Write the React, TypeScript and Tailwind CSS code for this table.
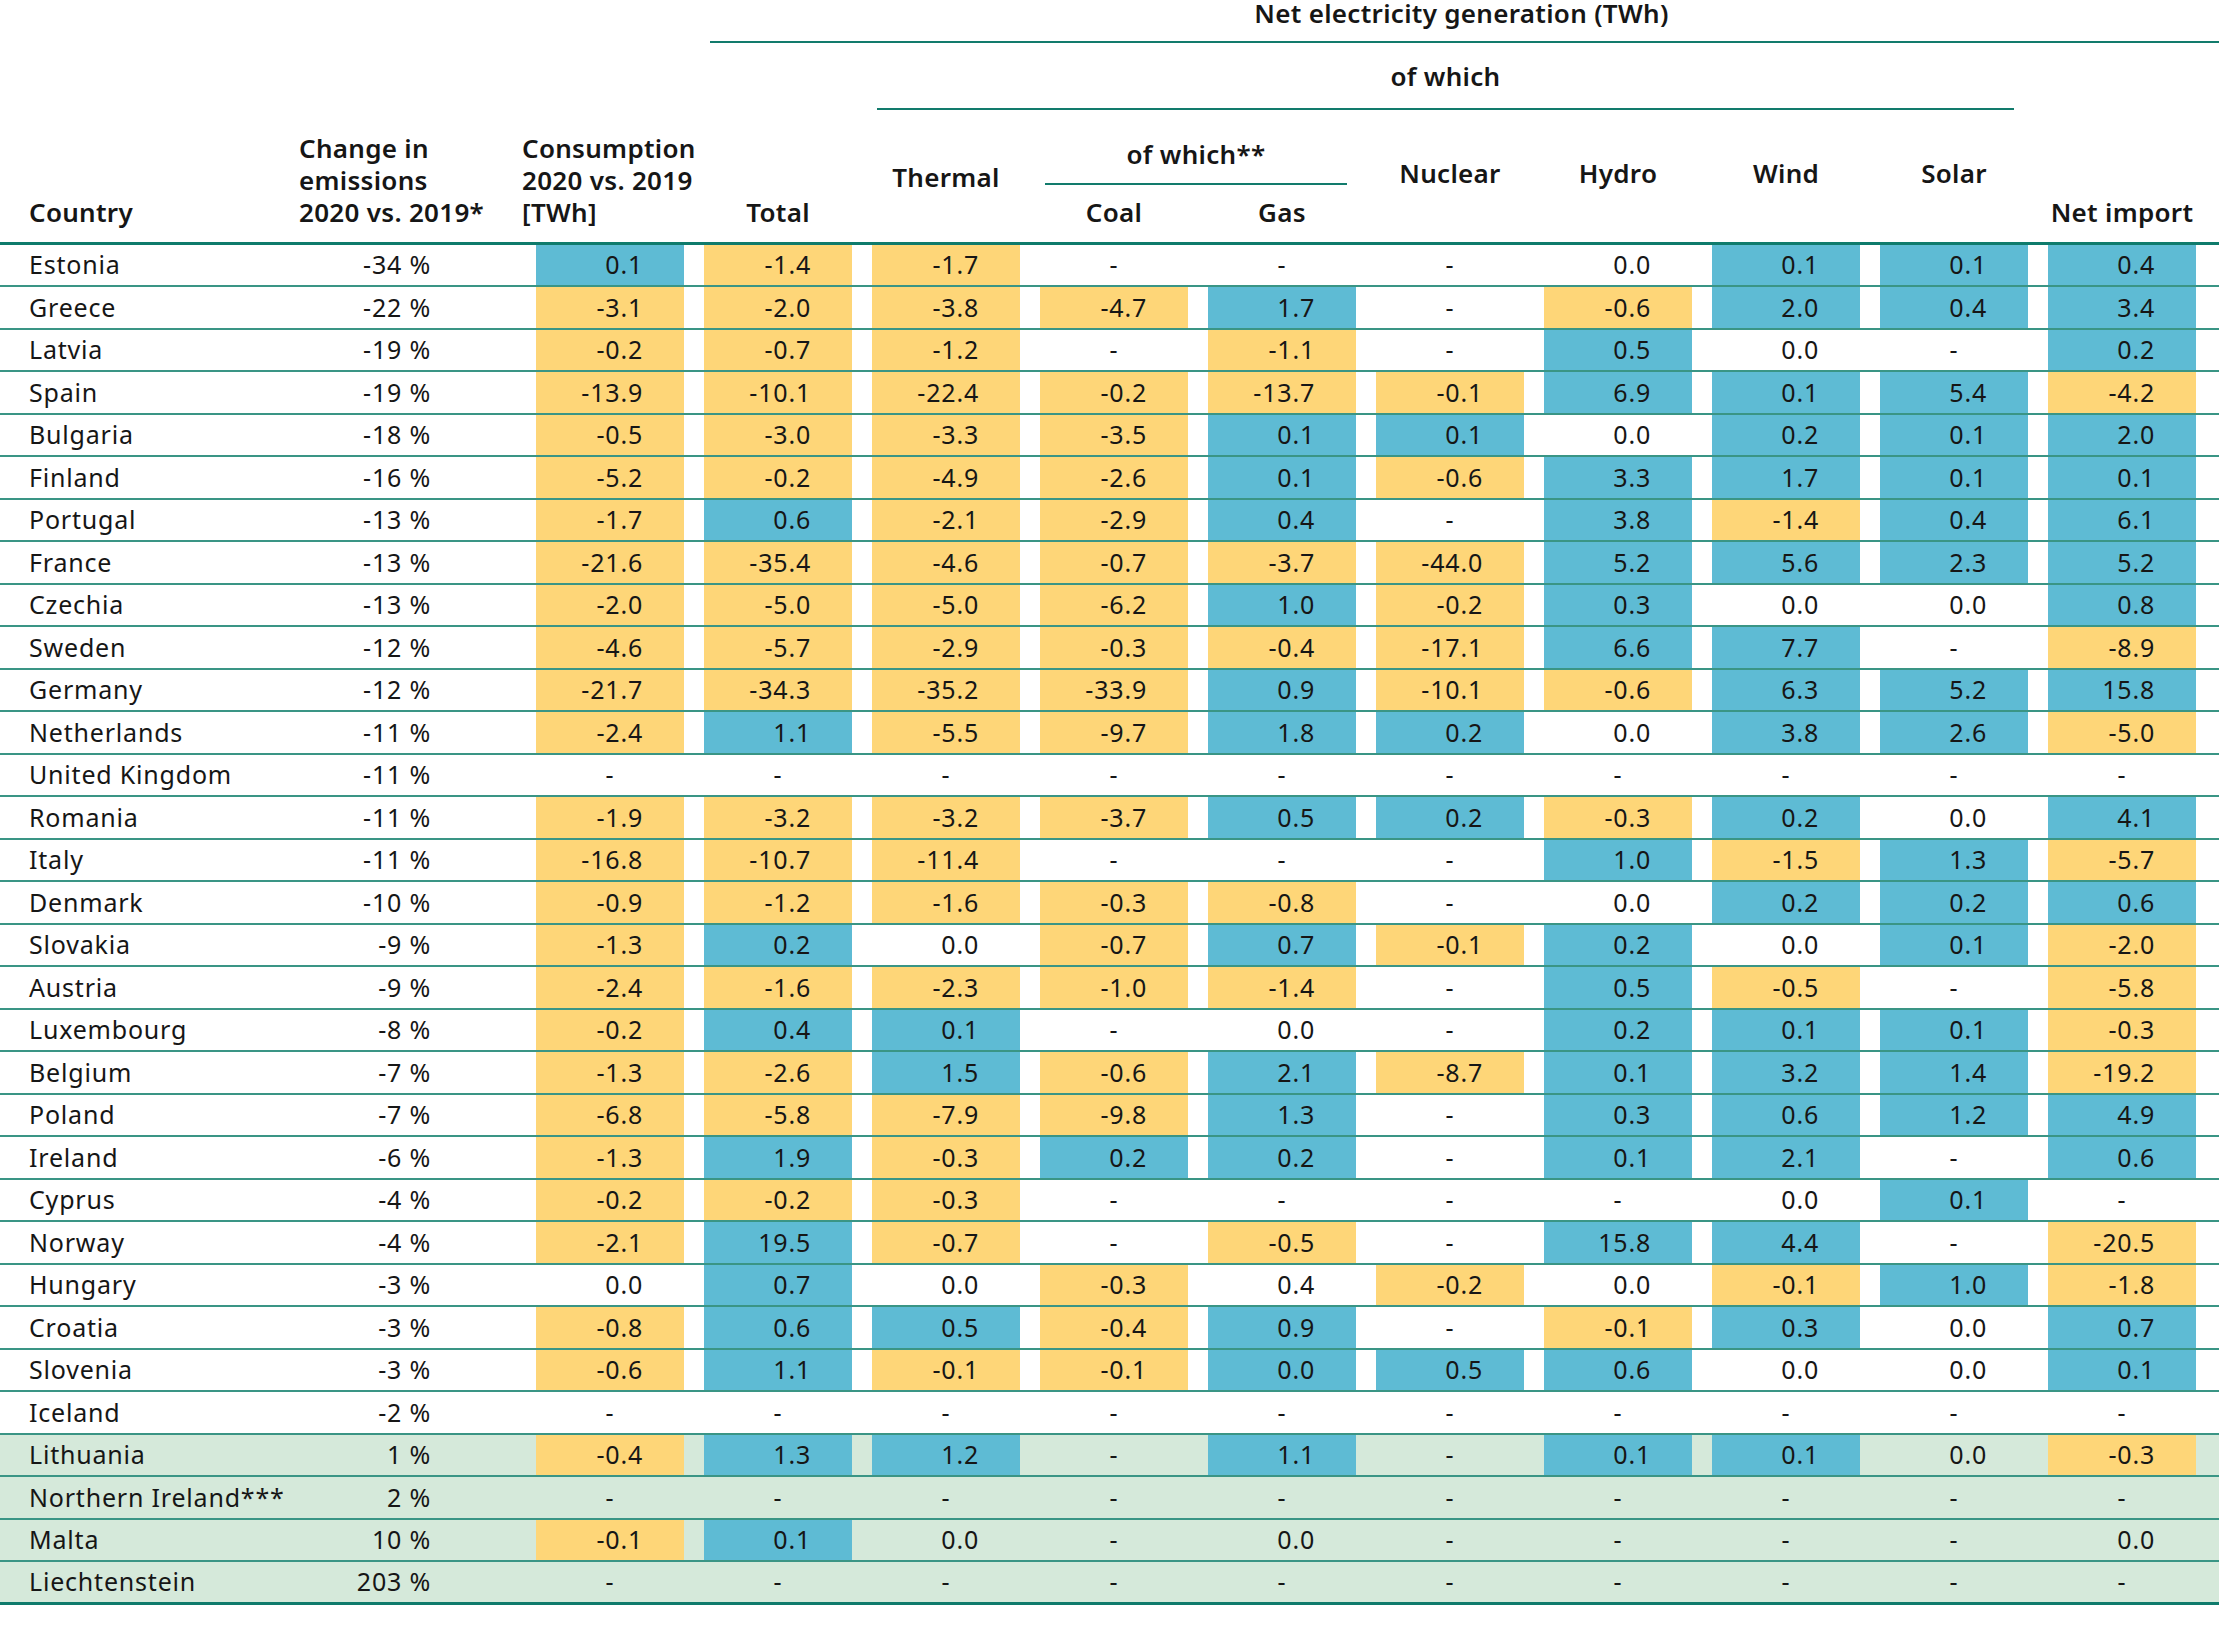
type Row = { name: string; change: string; cells: string[]; green?: boolean };

// cell values: trailing "b" = blue (increase), "y" = yellow (decrease), none = plain
const ROWS: Row[] = [
  { name: "Estonia", change: "-34 %", cells: ["0.1b", "-1.4y", "-1.7y", "-", "-", "-", "0.0", "0.1b", "0.1b", "0.4b"] },
  { name: "Greece", change: "-22 %", cells: ["-3.1y", "-2.0y", "-3.8y", "-4.7y", "1.7b", "-", "-0.6y", "2.0b", "0.4b", "3.4b"] },
  { name: "Latvia", change: "-19 %", cells: ["-0.2y", "-0.7y", "-1.2y", "-", "-1.1y", "-", "0.5b", "0.0", "-", "0.2b"] },
  { name: "Spain", change: "-19 %", cells: ["-13.9y", "-10.1y", "-22.4y", "-0.2y", "-13.7y", "-0.1y", "6.9b", "0.1b", "5.4b", "-4.2y"] },
  { name: "Bulgaria", change: "-18 %", cells: ["-0.5y", "-3.0y", "-3.3y", "-3.5y", "0.1b", "0.1b", "0.0", "0.2b", "0.1b", "2.0b"] },
  { name: "Finland", change: "-16 %", cells: ["-5.2y", "-0.2y", "-4.9y", "-2.6y", "0.1b", "-0.6y", "3.3b", "1.7b", "0.1b", "0.1b"] },
  { name: "Portugal", change: "-13 %", cells: ["-1.7y", "0.6b", "-2.1y", "-2.9y", "0.4b", "-", "3.8b", "-1.4y", "0.4b", "6.1b"] },
  { name: "France", change: "-13 %", cells: ["-21.6y", "-35.4y", "-4.6y", "-0.7y", "-3.7y", "-44.0y", "5.2b", "5.6b", "2.3b", "5.2b"] },
  { name: "Czechia", change: "-13 %", cells: ["-2.0y", "-5.0y", "-5.0y", "-6.2y", "1.0b", "-0.2y", "0.3b", "0.0", "0.0", "0.8b"] },
  { name: "Sweden", change: "-12 %", cells: ["-4.6y", "-5.7y", "-2.9y", "-0.3y", "-0.4y", "-17.1y", "6.6b", "7.7b", "-", "-8.9y"] },
  { name: "Germany", change: "-12 %", cells: ["-21.7y", "-34.3y", "-35.2y", "-33.9y", "0.9b", "-10.1y", "-0.6y", "6.3b", "5.2b", "15.8b"] },
  { name: "Netherlands", change: "-11 %", cells: ["-2.4y", "1.1b", "-5.5y", "-9.7y", "1.8b", "0.2b", "0.0", "3.8b", "2.6b", "-5.0y"] },
  { name: "United Kingdom", change: "-11 %", cells: ["-", "-", "-", "-", "-", "-", "-", "-", "-", "-"] },
  { name: "Romania", change: "-11 %", cells: ["-1.9y", "-3.2y", "-3.2y", "-3.7y", "0.5b", "0.2b", "-0.3y", "0.2b", "0.0", "4.1b"] },
  { name: "Italy", change: "-11 %", cells: ["-16.8y", "-10.7y", "-11.4y", "-", "-", "-", "1.0b", "-1.5y", "1.3b", "-5.7y"] },
  { name: "Denmark", change: "-10 %", cells: ["-0.9y", "-1.2y", "-1.6y", "-0.3y", "-0.8y", "-", "0.0", "0.2b", "0.2b", "0.6b"] },
  { name: "Slovakia", change: "-9 %", cells: ["-1.3y", "0.2b", "0.0", "-0.7y", "0.7b", "-0.1y", "0.2b", "0.0", "0.1b", "-2.0y"] },
  { name: "Austria", change: "-9 %", cells: ["-2.4y", "-1.6y", "-2.3y", "-1.0y", "-1.4y", "-", "0.5b", "-0.5y", "-", "-5.8y"] },
  { name: "Luxembourg", change: "-8 %", cells: ["-0.2y", "0.4b", "0.1b", "-", "0.0", "-", "0.2b", "0.1b", "0.1b", "-0.3y"] },
  { name: "Belgium", change: "-7 %", cells: ["-1.3y", "-2.6y", "1.5b", "-0.6y", "2.1b", "-8.7y", "0.1b", "3.2b", "1.4b", "-19.2y"] },
  { name: "Poland", change: "-7 %", cells: ["-6.8y", "-5.8y", "-7.9y", "-9.8y", "1.3b", "-", "0.3b", "0.6b", "1.2b", "4.9b"] },
  { name: "Ireland", change: "-6 %", cells: ["-1.3y", "1.9b", "-0.3y", "0.2b", "0.2b", "-", "0.1b", "2.1b", "-", "0.6b"] },
  { name: "Cyprus", change: "-4 %", cells: ["-0.2y", "-0.2y", "-0.3y", "-", "-", "-", "-", "0.0", "0.1b", "-"] },
  { name: "Norway", change: "-4 %", cells: ["-2.1y", "19.5b", "-0.7y", "-", "-0.5y", "-", "15.8b", "4.4b", "-", "-20.5y"] },
  { name: "Hungary", change: "-3 %", cells: ["0.0", "0.7b", "0.0", "-0.3y", "0.4", "-0.2y", "0.0", "-0.1y", "1.0b", "-1.8y"] },
  { name: "Croatia", change: "-3 %", cells: ["-0.8y", "0.6b", "0.5b", "-0.4y", "0.9b", "-", "-0.1y", "0.3b", "0.0", "0.7b"] },
  { name: "Slovenia", change: "-3 %", cells: ["-0.6y", "1.1b", "-0.1y", "-0.1y", "0.0b", "0.5b", "0.6b", "0.0", "0.0", "0.1b"] },
  { name: "Iceland", change: "-2 %", cells: ["-", "-", "-", "-", "-", "-", "-", "-", "-", "-"] },
  { name: "Lithuania", change: "1 %", green: true, cells: ["-0.4y", "1.3b", "1.2b", "-", "1.1b", "-", "0.1b", "0.1b", "0.0", "-0.3y"] },
  { name: "Northern Ireland***", change: "2 %", green: true, cells: ["-", "-", "-", "-", "-", "-", "-", "-", "-", "-"] },
  { name: "Malta", change: "10 %", green: true, cells: ["-0.1y", "0.1b", "0.0", "-", "0.0", "-", "-", "-", "-", "0.0"] },
  { name: "Liechtenstein", change: "203 %", green: true, cells: ["-", "-", "-", "-", "-", "-", "-", "-", "-", "-"] },
];

const GRID = "grid grid-cols-[289px_237px_repeat(10,168px)_1fr]";

function Cell({ v }: { v: string }) {
  const tone = v.endsWith("b") ? "b" : v.endsWith("y") ? "y" : "";
  const text = tone ? v.slice(0, -1) : v;
  const bg = tone === "b" ? "bg-[#5ebbd4]" : tone === "y" ? "bg-[#fed678]" : "";
  const align = text === "-" ? "justify-center" : "justify-end pr-[41px]";
  return (
    <div className="px-[10px] h-full">
      <div className={`h-full flex items-center ${align} ${bg}`}>{text}</div>
    </div>
  );
}

function Header() {
  return (
    <div className={`${GRID} grid-rows-[43px_67px_75px_57px] font-semibold text-[26px] tracking-[0.3px]`}>
      <div className="col-start-1 row-start-1 row-span-4 self-end pl-[29px] pb-[14px] leading-[32px]">Country</div>
      <div className="col-start-2 row-start-1 row-span-4 self-end pl-[10px] pb-[14px] leading-[32px] whitespace-nowrap">
        Change in<br />emissions<br />2020 vs. 2019*
      </div>
      <div className="col-start-3 row-start-1 row-span-4 self-end ml-[-4px] pb-[14px] leading-[32px] whitespace-nowrap">
        Consumption<br />2020 vs. 2019<br />[TWh]
      </div>
      <div className="col-start-4 col-span-10 row-start-1 ml-[16px] border-b-2 border-[#127b6c] text-center leading-[26px] pr-[6px]">
        Net electricity generation (TWh)
      </div>
      <div className="col-start-4 row-start-2 row-span-3 self-end pb-[14px] leading-[32px] text-center">Total</div>
      <div className="col-start-5 col-span-7 row-start-2 ml-[15px] mr-[24px] border-b-2 border-[#127b6c] text-center pt-[20px] leading-[26px]">
        of which
      </div>
      <div className="col-start-5 row-start-3 row-span-2 self-end pb-[52px] leading-[26px] text-center">Thermal</div>
      <div className="col-start-6 col-span-2 row-start-3 ml-[15px] mr-[19px] border-b-2 border-[#127b6c] text-center pt-[31px] leading-[26px]">
        of which**
      </div>
      <div className="col-start-6 row-start-4 self-end pb-[17px] leading-[26px] text-center">Coal</div>
      <div className="col-start-7 row-start-4 self-end pb-[17px] leading-[26px] text-center">Gas</div>
      <div className="col-start-8 row-start-3 row-span-2 self-end pb-[56px] leading-[26px] text-center">Nuclear</div>
      <div className="col-start-9 row-start-3 row-span-2 self-end pb-[56px] leading-[26px] text-center">Hydro</div>
      <div className="col-start-10 row-start-3 row-span-2 self-end pb-[56px] leading-[26px] text-center">Wind</div>
      <div className="col-start-11 row-start-3 row-span-2 self-end pb-[56px] leading-[26px] text-center">Solar</div>
      <div className="col-start-12 row-start-1 row-span-4 self-end pb-[14px] leading-[32px] text-center whitespace-nowrap">Net import</div>
    </div>
  );
}

export default function App() {
  return (
    <div className="w-[2219px] min-h-[1646px] bg-white text-[#161616] font-['Noto_Sans',sans-serif]">
      <Header />
      <div className="h-[3px] bg-[#0f7b6c]" />
      <div className="text-[25px] tracking-[0.8px]">
        {ROWS.map((r, i) => {
          const last = i === ROWS.length - 1;
          const h = i % 2 === 0 ? "h-[42px]" : "h-[43px]";
          const border = last ? "border-b-[3px] border-[#0f7b6c]" : "border-b-2 border-[#3a9585]";
          return (
            <div key={r.name} className={`${GRID} ${h} ${border} ${r.green ? "bg-[#d5e9da]" : ""}`}>
              <div className="flex items-center pl-[29px] whitespace-nowrap">{r.name}</div>
              <div className="flex items-center justify-end pr-[95px]">{r.change}</div>
              {r.cells.map((c, j) => (
                <Cell key={j} v={c} />
              ))}
            </div>
          );
        })}
      </div>
    </div>
  );
}
